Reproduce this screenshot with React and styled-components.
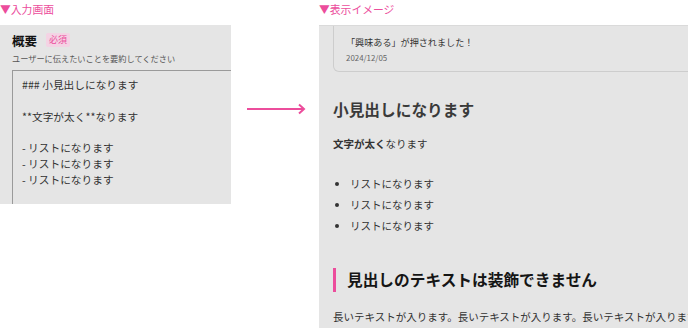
import React from 'react';
import styled, { createGlobalStyle } from 'styled-components';

const GlobalStyle = createGlobalStyle`
  html, body {
    margin: 0;
    padding: 0;
    background: #fff;
    font-family: "Noto Sans CJK JP", "Noto Sans", sans-serif;
  }
`;

const PINK = '#ec4d9c';

// Layout
const Page = styled.div`
  display: flex;
  width: 688px;
  height: 328px;
  overflow: hidden;
`;

const Column = styled.div`
  display: flex;
  flex-direction: column;
  width: ${(p) => p.width}px;
  flex-shrink: 0;
`;

const Label = styled.div`
  height: 19px;
  font-size: 10.8px;
  line-height: 18px;
  color: ${PINK};
  margin-bottom: 6px;
`;

// Left: input screen
const InputPanel = styled.div`
  background: #e5e5e5;
  height: 179px;
  padding: 7px 0 0 12px;
  box-sizing: border-box;
  overflow: hidden;
`;

const FieldHead = styled.div`
  display: flex;
  align-items: center;
  gap: 9px;
  height: 16px;
`;

const FieldTitle = styled.span`
  font-size: 12.5px;
  font-weight: 700;
  color: #111;
`;

const Badge = styled.span`
  font-size: 9px;
  line-height: 14px;
  padding: 0 3px;
  color: ${PINK};
  background: #f4d3e4;
  border-radius: 2px;
`;

const Hint = styled.div`
  font-size: 8.2px;
  color: #555;
  margin-top: 4px;
  line-height: 12px;
`;

const TextArea = styled.div`
  margin-top: 6px;
  width: 260px;
  height: 160px;
  border-top: 1.5px solid #9a9a9a;
  border-left: 1.5px solid #9a9a9a;
  padding: 6px 0 0 9px;
  font-size: 10.7px;
  line-height: 15.8px;
  color: #333;
  white-space: pre;
`;

// Arrow between panels
const ArrowCell = styled.div`
  width: 88px;
  flex-shrink: 0;
  display: flex;
  align-items: flex-start;
  padding: 101px 0 0 16px;
  box-sizing: border-box;
`;

// Right: preview
const PreviewPanel = styled.div`
  background: #e5e5e5;
  height: 303px;
  padding: 0 0 0 14px;
  box-sizing: border-box;
  overflow: hidden;
  border-top: 1px solid #dadada;
`;

const Card = styled.div`
  width: 400px;
  border: 1px solid #cdcdcd;
  border-top: none;
  border-radius: 0 0 6px 6px;
  padding: 10px 12px 8px;
  box-sizing: border-box;
  height: 46px;
`;

const CardText = styled.div`
  font-size: 9.1px;
  line-height: 13px;
  color: #333;
`;

const CardDate = styled.div`
  font-size: 7.9px;
  line-height: 11px;
  color: #666;
  margin-top: 3px;
`;

const SubHeading = styled.h3`
  margin: 26px 0 0;
  font-size: 15.7px;
  line-height: 24px;
  font-weight: 700;
  color: #3a3a3a;
`;

const Paragraph = styled.p`
  margin: ${(p) => p.top || 0}px 0 0;
  font-size: 10.5px;
  line-height: 16px;
  color: #333;
  white-space: nowrap;
`;

const List = styled.ul`
  margin: 24px 0 0;
  padding-left: 17px;
`;

const ListItem = styled.li`
  font-size: 10.5px;
  line-height: 16px;
  color: #333;
  margin-bottom: 4.8px;
  &::marker {
    font-size: 10px;
  }
`;

const AccentHeading = styled.h2`
  margin: 34px 0 0;
  border-left: 3px solid ${PINK};
  padding-left: 11px;
  font-size: 15.7px;
  line-height: 24px;
  font-weight: 700;
  color: #151515;
`;

const Arrow = () => (
  <svg width="60" height="16" viewBox="0 0 60 16">
    <path d="M0 8 H57" stroke={PINK} strokeWidth="2" fill="none" />
    <path d="M52 3.5 L57 8 L52 12.5" stroke={PINK} strokeWidth="2" fill="none" />
  </svg>
);

const inputText = `### 小見出しになります

**文字が太く**なります

- リストになります
- リストになります
- リストになります`;

export default function App() {
  return (
    <Page>
      <GlobalStyle />
      <Column width={231}>
        <Label>▼入力画面</Label>
        <InputPanel>
          <FieldHead>
            <FieldTitle>概要</FieldTitle>
            <Badge>必須</Badge>
          </FieldHead>
          <Hint>ユーザーに伝えたいことを要約してください</Hint>
          <TextArea>{inputText}</TextArea>
        </InputPanel>
      </Column>
      <ArrowCell>
        <Arrow />
      </ArrowCell>
      <Column width={369}>
        <Label>▼表示イメージ</Label>
        <PreviewPanel>
          <Card>
            <CardText>「興味ある」が押されました！</CardText>
            <CardDate>2024/12/05</CardDate>
          </Card>
          <SubHeading>小見出しになります</SubHeading>
          <Paragraph top={14}>
            <b>文字が太く</b>なります
          </Paragraph>
          <List>
            <ListItem>リストになります</ListItem>
            <ListItem>リストになります</ListItem>
            <ListItem>リストになります</ListItem>
          </List>
          <AccentHeading>見出しのテキストは装飾できません</AccentHeading>
          <Paragraph top={17}>
            長いテキストが入ります。長いテキストが入ります。長いテキストが入ります。
          </Paragraph>
        </PreviewPanel>
      </Column>
    </Page>
  );
}
